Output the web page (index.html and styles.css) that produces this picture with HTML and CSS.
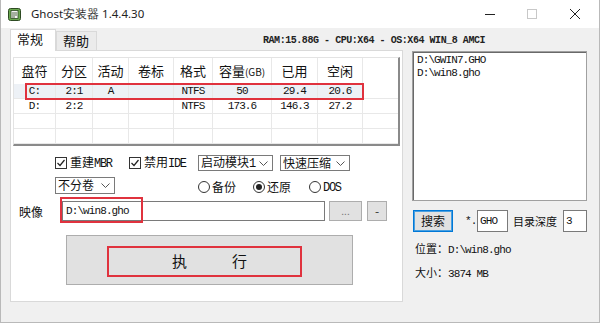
FILE: index.html
```html
<!DOCTYPE html>
<html>
<head>
    <title>Ghost安装器</title>
    <meta charset="UTF-8">
<link rel="stylesheet" href="styles.css">
</head>
<body>
<div class="window">
    <div class="titlebar">
        <svg class="app-icon" width="15" height="15" viewBox="0 0 15 15">
            <rect x="1.5" y="1.5" width="12" height="12" rx="2" fill="#6aa84f" stroke="#2d4a22"/>
            <rect x="4" y="3.5" width="7" height="8" fill="#f4f4f4" stroke="#2d4a22" stroke-width="0.8"/>
            <path d="M5 6h5M5 8h5M5 10h3" stroke="#2d4a22" stroke-width="0.8"/>
        </svg>
        <span class="title">Ghost安装器 1.4.4.30</span>
        <div class="controls">
            <span class="ctl"><svg width="10" height="10" viewBox="0 0 10 10"><path d="M0 5.5h10" stroke="#222" stroke-width="1"/></svg></span>
            <span class="ctl"><svg width="10" height="10" viewBox="0 0 10 10"><rect x="0.5" y="0.5" width="9" height="9" fill="none" stroke="#c8c8c8"/></svg></span>
            <span class="ctl"><svg width="10" height="10" viewBox="0 0 10 10"><path d="M0 0L10 10M10 0L0 10" stroke="#222" stroke-width="1"/></svg></span>
        </div>
    </div>

    <div class="client">
        <div class="tabrow">
            <div class="tab active">常规</div>
            <div class="tab">帮助</div>
            <div class="sysinfo mono">RAM:15.88G - CPU:X64 - OS:X64 WIN_8 AMCI</div>
        </div>

        <div class="main">
            <div class="panel">
                <div class="listview">
                    <div class="lv-row lv-head">
                        <span>盘符</span><span>分区</span><span>活动</span><span>卷标</span><span>格式</span><span>容量<small>(GB)</small></span><span>已用</span><span>空闲</span><span></span>
                    </div>
                    <div class="lv-row selected mono">
                        <span>C:</span><span>2:1</span><span>A</span><span></span><span>NTFS</span><span>50</span><span>29.4</span><span>20.6</span><span></span>
                    </div>
                    <div class="lv-row mono">
                        <span>D:</span><span>2:2</span><span></span><span></span><span>NTFS</span><span>173.6</span><span>146.3</span><span>27.2</span><span></span>
                    </div>
                    <div class="lv-row"><span></span><span></span><span></span><span></span><span></span><span></span><span></span><span></span><span></span></div>
                    <div class="lv-row"><span></span><span></span><span></span><span></span><span></span><span></span><span></span><span></span><span></span></div>
                    <div class="mark mark-row"></div>
                </div>

                <div class="opt-row first">
                    <div class="opt-left">
                        <label class="check"><span class="box"><svg width="10" height="10" viewBox="0 0 10 10"><path d="M1.5 5L4 7.5L8.5 2" fill="none" stroke="#222" stroke-width="1.2"/></svg></span><span class="txt">重建<span class="mono">MBR</span></span></label>
                        <label class="check second"><span class="box"><svg width="10" height="10" viewBox="0 0 10 10"><path d="M1.5 5L4 7.5L8.5 2" fill="none" stroke="#222" stroke-width="1.2"/></svg></span><span class="txt">禁用<span class="mono">IDE</span></span></label>
                    </div>
                    <div class="select boot"><span class="txt">启动模块<span class="mono">1</span></span><svg class="arrow" width="9" height="5" viewBox="0 0 9 5"><path d="M0.5 0.5L4.5 4.5L8.5 0.5" fill="none" stroke="#555"/></svg></div>
                    <div class="select zip"><span class="txt">快速压缩</span><svg class="arrow" width="9" height="5" viewBox="0 0 9 5"><path d="M0.5 0.5L4.5 4.5L8.5 0.5" fill="none" stroke="#555"/></svg></div>
                </div>

                <div class="opt-row">
                    <div class="opt-left">
                        <div class="select split"><span class="txt">不分卷</span><svg class="arrow" width="9" height="5" viewBox="0 0 9 5"><path d="M0.5 0.5L4.5 4.5L8.5 0.5" fill="none" stroke="#555"/></svg></div>
                    </div>
                    <div class="radios">
                        <label class="radio"><span class="dot"></span><span class="txt">备份</span></label>
                        <label class="radio on"><span class="dot"></span><span class="txt">还原</span></label>
                        <label class="radio"><span class="dot"></span><span class="txt"><span class="mono">DOS</span></span></label>
                    </div>
                </div>

                <div class="image-row">
                    <span class="image-label">映像</span>
                    <div class="image-input">
                        <div class="field mono">D:\win8.gho</div>
                        <div class="mark mark-input"></div>
                    </div>
                    <div class="btn browse">...</div>
                    <div class="btn minus">-</div>
                </div>

                <div class="run">
                    <span>执</span><span>行</span>
                    <div class="mark mark-run"></div>
                </div>
            </div>

            <div class="side">
                <div class="filelist mono">
                    <div>D:\GWIN7.GHO</div>
                    <div>D:\win8.gho</div>
                </div>
                <div class="search-row">
                    <div class="btn search">搜索</div>
                    <span class="ext mono">*.</span>
                    <div class="field small ext-field mono">GHO</div>
                    <span class="depth">目录深度</span>
                    <div class="field small depth-field mono">3</div>
                </div>
                <div class="info">位置：<span class="mono">D:\win8.gho</span></div>
                <div class="info">大小：<span class="mono">3874 MB</span></div>
            </div>
        </div>
    </div>
</div>
</body>
</html>
```

FILE: styles.css
```css
* {
  box-sizing: border-box;
}

body {
  margin: 0;
  background: #fff;
  font-family: "Noto Sans CJK SC", "Noto Sans", sans-serif;
  font-size: 12px;
  color: #111;
}

.mono {
  font-family: "Liberation Mono", monospace;
  font-size: 11px;
  letter-spacing: -0.9px;
}

.txt {
  white-space: nowrap;
  line-height: 14px;
}

.txt .mono {
  font-size: 12px;
  letter-spacing: -1.3px;
}

/* Window frame */
.window {
  width: 600px;
  height: 323px;
  border: 1px solid #b9b9b9;
  border-top: none;
  background: #f0f0f0;
  display: flex;
  flex-direction: column;
}

.titlebar {
  height: 28px;
  background: #fff;
  display: flex;
  align-items: center;
}

.app-icon {
  margin-left: 6px;
}

.title {
  margin-left: 9px;
  font-family: "Noto Sans", sans-serif;
  font-size: 11.5px;
  color: #222;
}

.controls {
  margin-left: auto;
  display: flex;
}

.ctl {
  width: 42px;
  height: 28px;
  display: flex;
  align-items: center;
  justify-content: center;
}

.ctl:last-child {
  width: 44px;
  margin-right: 2px;
}

/* Tabs */
.client {
  flex: 1;
  padding: 1px 0 0 9px;
}

.tabrow {
  height: 21px;
  display: flex;
  align-items: flex-end;
}

.tab {
  height: 19px;
  width: 41px;
  padding-left: 6px;
  border: 1px solid #d9d9d9;
  border-bottom: none;
  background: #ebebeb;
  font-size: 13px;
  line-height: 18px;
}

.tab.active {
  height: 22px;
  width: 46px;
  margin-bottom: -1px;
  background: #fff;
  position: relative;
}

.sysinfo {
  align-self: center;
  margin-left: 166px;
  margin-top: 2px;
  font-size: 10px;
  letter-spacing: -0.45px;
  color: #222;
  font-weight: bold;
}

.main {
  display: flex;
}

/* General tab */
.panel {
  width: 393px;
  height: 252px;
  background: #fff;
  border: 1px solid #d9d9d9;
}

.listview {
  position: relative;
  width: 387px;
  height: 89px;
  margin: 6px 0 0 2px;
  border-top: 1px solid #e3e3e3;
  border-left: 1px solid #e3e3e3;
  border-right: 2px solid #8a8a8a;
  border-bottom: 2px solid #8a8a8a;
}

.lv-row {
  display: grid;
  grid-template-columns: 42px 37px 36px 45px 39px 59px 46px 45px 1fr;
  height: 15px;
  line-height: 14px;
}

.lv-row span {
  border-right: 1px solid #e8e8e8;
  border-bottom: 1px solid #e8e8e8;
  text-align: center;
  white-space: nowrap;
}

.lv-row span:last-child {
  border-right: none;
}

.lv-head {
  height: 26px;
  line-height: 25px;
  font-size: 13px;
}

.lv-head small {
  font-size: 10px;
}

.selected span {
  background: #edf1f6;
}

.selected span:last-child {
  background: #fff;
}

/* Red annotation boxes */
.mark {
  position: absolute;
  border: 2px solid #e0323e;
}

.mark-row {
  left: 11px;
  top: 25px;
  width: 339px;
  height: 17px;
}

.mark-input {
  left: -2px;
  top: -4px;
  width: 83px;
  height: 26px;
}

.mark-run {
  left: 40px;
  top: 10px;
  width: 195px;
  height: 31px;
}

/* Options */
.opt-row {
  display: flex;
  align-items: center;
  margin-top: 5px;
  height: 18px;
}

.opt-row.first {
  margin-top: 9px;
  height: 16px;
}

.opt-left {
  width: 187px;
  padding-left: 44px;
  display: flex;
  align-items: center;
}

.check {
  display: flex;
  align-items: center;
  font-size: 12px;
  width: 74px;
}

.check.second {
  width: auto;
}

.box {
  width: 12px;
  height: 12px;
  border: 1px solid #333;
  margin-right: 3px;
  display: flex;
  align-items: center;
  justify-content: center;
}

.select {
  position: relative;
  height: 16px;
  border: 1px solid #7a7a7a;
  background: #fff;
  padding-left: 2px;
  font-size: 12px;
  display: flex;
  align-items: center;
}

.select .arrow {
  margin-left: auto;
  margin-right: 4px;
}

.boot {
  width: 75px;
}

.zip {
  width: 70px;
  margin-left: 7px;
}

.split {
  width: 60px;
  height: 17px;
}

.radios {
  display: flex;
  padding-top: 4px;
}

.radio {
  display: flex;
  align-items: center;
  font-size: 12px;
  width: 55px;
}

.radio:nth-child(2) {
  width: 56px;
}

.dot {
  width: 12px;
  height: 12px;
  border: 1px solid #333;
  border-radius: 50%;
  margin-right: 2px;
  display: flex;
  align-items: center;
  justify-content: center;
}

.radio.on .dot::after {
  content: "";
  width: 6px;
  height: 6px;
  border-radius: 50%;
  background: #222;
}

/* Image path */
.image-row {
  display: flex;
  align-items: center;
  margin-top: 7px;
  height: 20px;
}

.image-label {
  width: 51px;
  padding-left: 8px;
  font-size: 12px;
}

.image-input {
  position: relative;
}

.field {
  height: 20px;
  border: 1px solid #7a7a7a;
  background: #fff;
  padding-left: 3px;
  line-height: 18px;
}

.image-input .field {
  width: 263px;
}

.btn {
  height: 20px;
  border: 1px solid #adadad;
  background: #e1e1e1;
  text-align: center;
  line-height: 17px;
  color: #777;
}

.browse {
  width: 33px;
  margin-left: 4px;
  font-size: 10px;
}

.minus {
  width: 20px;
  margin-left: 5px;
  color: #333;
}

.run {
  position: relative;
  width: 287px;
  height: 50px;
  margin: 14px 0 0 55px;
  border: 1px solid #adadad;
  background: #e1e1e1;
  display: flex;
  align-items: center;
  justify-content: center;
  gap: 45px;
  font-size: 15px;
  padding-top: 1px;
}

/* Right column */
.side {
  width: 176px;
  margin-left: 9px;
  padding-top: 1px;
}

.filelist {
  width: 175px;
  height: 150px;
  background: #fff;
  border: 1px solid #a0a0a0;
  box-shadow: inset 1px 1px 0 #696969;
  padding: 2px 0 0 4px;
  line-height: 13px;
  color: #111;
}

.search-row {
  display: flex;
  align-items: center;
  height: 22px;
  margin-top: 9px;
}

.search {
  width: 40px;
  height: 22px;
  margin-left: 1px;
  border: 1px solid #0078d7;
  box-shadow: inset 0 0 0 1px #4aa0e0;
  color: #111;
  font-size: 12px;
  line-height: 19px;
}

.ext {
  margin-left: 12px;
  width: 12px;
}

.field.small {
  height: 22px;
  line-height: 20px;
  padding-left: 2px;
}

.ext-field {
  width: 31px;
}

.depth {
  margin-left: 5px;
  font-size: 11px;
  width: 50px;
}

.depth-field {
  width: 24px;
}

.info {
  margin: 8px 0 0 3px;
  height: 16px;
  line-height: 16px;
  font-size: 11px;
}

.info + .info {
  margin-top: 8px;
}
```
